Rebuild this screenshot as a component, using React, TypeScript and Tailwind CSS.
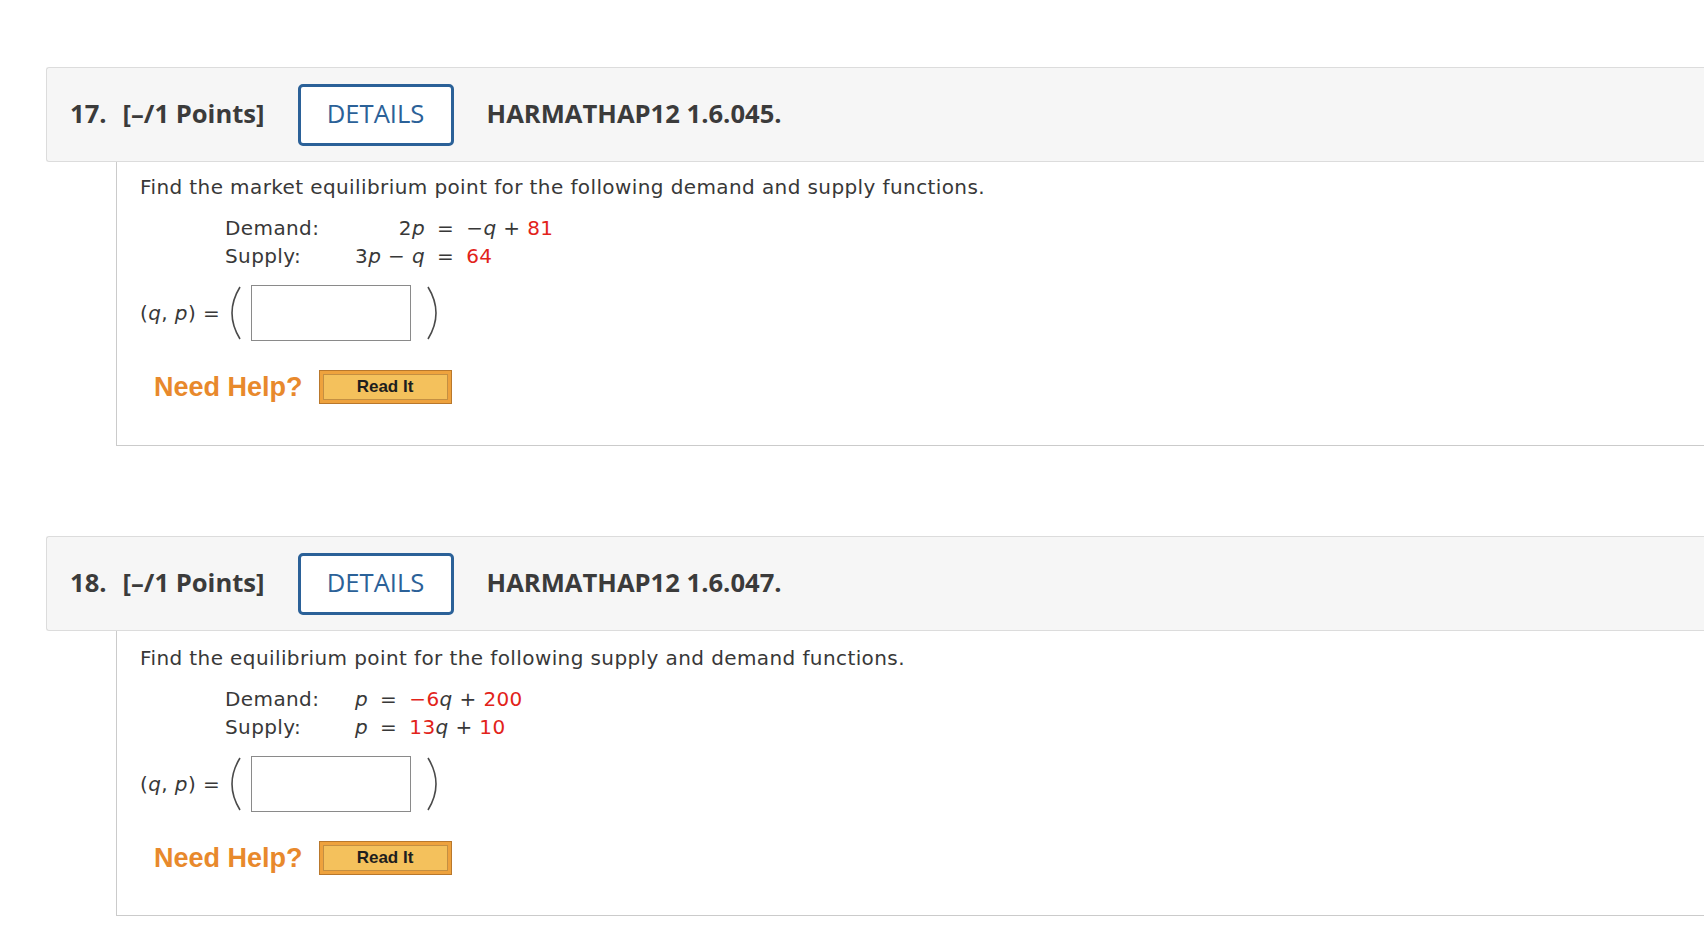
import React from "react";

const Paren = ({ right = false }: { right?: boolean }) => (
  <svg width="12" height="54" viewBox="0 0 12 54" className="shrink-0">
    <path
      d={right ? "M2 1 Q10 14 10 27 Q10 40 2 53" : "M10 1 Q2 14 2 27 Q2 40 10 53"}
      fill="none"
      stroke="#4a4a4a"
      strokeWidth="1.6"
    />
  </svg>
);

const V = ({ children }: { children: React.ReactNode }) => <i className="italic">{children}</i>;
const R = ({ children }: { children: React.ReactNode }) => <span className="text-[#e2231a]">{children}</span>;

type Row = { label: string; lhs: React.ReactNode; rhs: React.ReactNode };

const Problem = ({
  num,
  code,
  prompt,
  rows,
  second = false,
}: {
  num: string;
  code: string;
  prompt: string;
  rows: Row[];
  second?: boolean;
}) => (
  <div>
    <div className="flex h-[95px] items-center rounded-l-[3px] border border-r-0 border-[#dcdcdc] bg-[#f6f6f6] pl-[23px] font-['Open_Sans',sans-serif] text-[25.6px] font-bold text-[#3b3b3b]">
      <span>{num}</span>
      <span className="ml-[16px]">[–/1 Points]</span>
      <div className="ml-[33px] flex h-[62px] w-[156px] items-center justify-center rounded-[5px] border-[3px] border-[#2b6198] bg-white font-medium text-[#2b6198]">
        DETAILS
      </div>
      <span className="ml-[33px]">{code}</span>
    </div>
    <div
      className={
        second
          ? "ml-[70px] border-b border-l border-[#cbcbcb] pb-[40px] pl-[23px] pt-[15px] font-['DejaVu_Sans',Verdana,sans-serif] text-[20px] tracking-[0.4px] text-[#383838]"
          : "ml-[70px] border-b border-l border-[#cbcbcb] pb-[41px] pl-[23px] pt-[13px] font-['DejaVu_Sans',Verdana,sans-serif] text-[20px] tracking-[0.4px] text-[#383838]"
      }
    >
      <div className="leading-[24px]">{prompt}</div>
      <div className="mt-[15px] ml-[85px] grid grid-cols-[130px_auto_auto_1fr] leading-[28px]">
        {rows.map((r, i) => (
          <React.Fragment key={i}>
            <div>{r.label}</div>
            <div className="text-right">{r.lhs}</div>
            <div className="px-[12px]">=</div>
            <div>{r.rhs}</div>
          </React.Fragment>
        ))}
      </div>
      <div className="mt-[15px] flex h-[56px] items-center">
        <span className="whitespace-pre">
          (<V>q</V>, <V>p</V>) =
        </span>
        <div className="ml-[10px]">
          <Paren />
        </div>
        <div className="ml-[9px] h-[56px] w-[160px] border border-[#8a8a8a] bg-white" />
        <div className="ml-[15px]">
          <Paren right />
        </div>
      </div>
      <div className="mt-[29px] flex items-center pl-[14px]">
        <span className="font-['Liberation_Sans',Arial,sans-serif] text-[27px] font-bold leading-[34px] tracking-normal text-[#e8892c]">
          Need Help?
        </span>
        <div className="ml-[16px] flex h-[34px] w-[133px] items-center justify-center border border-[#b9782c] bg-[#eea23d] p-[3px]">
          <div className="flex h-full w-full items-center justify-center border border-[#c48f42] bg-[#f4c15c] font-['Liberation_Sans',Arial,sans-serif] text-[17px] font-bold tracking-normal text-[#1e1e1e]">
            Read It
          </div>
        </div>
      </div>
    </div>
  </div>
);

export default function App() {
  return (
    <div className="min-h-screen w-full overflow-hidden bg-white pl-[46px] pt-[67px]">
      <Problem
        num="17."
        code="HARMATHAP12 1.6.045."
        prompt="Find the market equilibrium point for the following demand and supply functions."
        rows={[
          {
            label: "Demand:",
            lhs: (
              <>
                2<V>p</V>
              </>
            ),
            rhs: (
              <>
                −<V>q</V> + <R>81</R>
              </>
            ),
          },
          {
            label: "Supply:",
            lhs: (
              <>
                3<V>p</V> − <V>q</V>
              </>
            ),
            rhs: <R>64</R>,
          },
        ]}
      />
      <div className="h-[90px]" />
      <Problem
        second
        num="18."
        code="HARMATHAP12 1.6.047."
        prompt="Find the equilibrium point for the following supply and demand functions."
        rows={[
          {
            label: "Demand:",
            lhs: <V>p</V>,
            rhs: (
              <>
                <R>−6</R>
                <V>q</V> + <R>200</R>
              </>
            ),
          },
          {
            label: "Supply:",
            lhs: <V>p</V>,
            rhs: (
              <>
                <R>13</R>
                <V>q</V> + <R>10</R>
              </>
            ),
          },
        ]}
      />
    </div>
  );
}
